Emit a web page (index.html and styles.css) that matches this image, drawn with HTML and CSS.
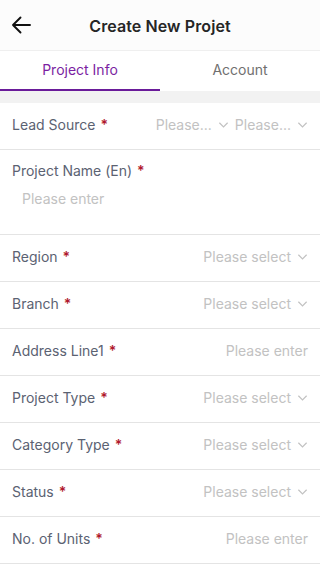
FILE: index.html
```html
<!DOCTYPE html>
<html>
<head>
<meta charset="utf-8">
<link rel="stylesheet" href="styles.css">
</head>
<body>
<div class="app">
  <header class="header">
    <span class="back">
      <svg width="20" height="18" viewBox="0 0 20 18"><path d="M19 9H2M9.5 1.5L2 9l7.5 7.5" fill="none" stroke="#111" stroke-width="1.9" stroke-linecap="round" stroke-linejoin="round"/></svg>
    </span>
    <h1 class="title">Create New Projet</h1>
  </header>
  <nav class="tabs">
    <div class="tab active">Project Info</div>
    <div class="tab">Account</div>
  </nav>
  <div class="gap"></div>
  <div class="form">
    <div class="row">
      <span class="label">Lead Source <i class="req">*</i></span>
      <span class="value">
        <span class="sel">Please...<svg class="chev" viewBox="0 0 12 8"><path d="M1.5 1.5L6 6l4.5-4.5" fill="none" stroke="#c2c2c2" stroke-width="1.3"/></svg></span>
        <span class="sel">Please...<svg class="chev" viewBox="0 0 12 8"><path d="M1.5 1.5L6 6l4.5-4.5" fill="none" stroke="#c2c2c2" stroke-width="1.3"/></svg></span>
      </span>
    </div>
    <div class="row stacked">
      <span class="label">Project Name (En) <i class="req">*</i></span>
      <span class="ph inline">Please enter</span>
    </div>
    <div class="row">
      <span class="label">Region <i class="req">*</i></span>
      <span class="sel">Please select<svg class="chev" viewBox="0 0 12 8"><path d="M1.5 1.5L6 6l4.5-4.5" fill="none" stroke="#c2c2c2" stroke-width="1.3"/></svg></span>
    </div>
    <div class="row">
      <span class="label">Branch <i class="req">*</i></span>
      <span class="sel">Please select<svg class="chev" viewBox="0 0 12 8"><path d="M1.5 1.5L6 6l4.5-4.5" fill="none" stroke="#c2c2c2" stroke-width="1.3"/></svg></span>
    </div>
    <div class="row">
      <span class="label">Address Line1 <i class="req">*</i></span>
      <span class="ph">Please enter</span>
    </div>
    <div class="row">
      <span class="label">Project Type <i class="req">*</i></span>
      <span class="sel">Please select<svg class="chev" viewBox="0 0 12 8"><path d="M1.5 1.5L6 6l4.5-4.5" fill="none" stroke="#c2c2c2" stroke-width="1.3"/></svg></span>
    </div>
    <div class="row">
      <span class="label">Category Type <i class="req">*</i></span>
      <span class="sel">Please select<svg class="chev" viewBox="0 0 12 8"><path d="M1.5 1.5L6 6l4.5-4.5" fill="none" stroke="#c2c2c2" stroke-width="1.3"/></svg></span>
    </div>
    <div class="row">
      <span class="label">Status <i class="req">*</i></span>
      <span class="sel">Please select<svg class="chev" viewBox="0 0 12 8"><path d="M1.5 1.5L6 6l4.5-4.5" fill="none" stroke="#c2c2c2" stroke-width="1.3"/></svg></span>
    </div>
    <div class="row">
      <span class="label">No. of Units <i class="req">*</i></span>
      <span class="ph">Please enter</span>
    </div>
  </div>
</div>
</body>
</html>
```

FILE: styles.css
```css
* { box-sizing: border-box; margin: 0; padding: 0; }
html, body { background: #fff; }
body {
  font-family: Inter, "Noto Sans", sans-serif;
  width: 320px;
  height: 570px;
  overflow: hidden;
}
.header {
  height: 51px;
  display: flex;
  align-items: center;
  justify-content: center;
  position: relative;
  background: #fcfcfc;
  border-bottom: 1px solid #efefef;
}
.back {
  position: absolute;
  left: 11px;
  top: 16px;
  display: flex;
}
.title {
  font-size: 16px;
  font-weight: 600;
  color: #262626;
  letter-spacing: 0.1px;
  margin-top: 1px;
}
.tabs {
  display: flex;
  height: 40px;
  background: #fff;
}
.tab {
  flex: 1;
  display: flex;
  align-items: center;
  justify-content: center;
  font-size: 14px;
  color: #707070;
  border-bottom: 2px solid transparent;
  padding-bottom: 1px;
}
.tab.active {
  color: #7b1fa2;
  border-bottom-color: #6a1b9a;
}
.gap {
  height: 12px;
  background: #f2f2f2;
}
.form { background: #fff; }
.row {
  height: 47px;
  border-bottom: 1px solid #e4e4e4;
  display: flex;
  align-items: center;
  justify-content: space-between;
  padding: 0 12px 3px;
  font-size: 14px;
}
.row.stacked {
  height: 85px;
  flex-direction: column;
  align-items: flex-start;
  justify-content: flex-start;
  padding-top: 12px;
  gap: 11px;
}
.label { color: #5b6272; white-space: nowrap; }
.req { color: #b0172c; font-style: normal; font-weight: 600; margin-left: 1px; }
.value { display: flex; gap: 6px; }
.sel {
  color: #c2c2c2;
  display: flex;
  align-items: center;
  gap: 6px;
  white-space: nowrap;
}
.chev { width: 11px; height: 8px; margin-top: 1px; }
.ph { color: #c2c2c2; }
.ph.inline { padding-left: 10px; }
```
